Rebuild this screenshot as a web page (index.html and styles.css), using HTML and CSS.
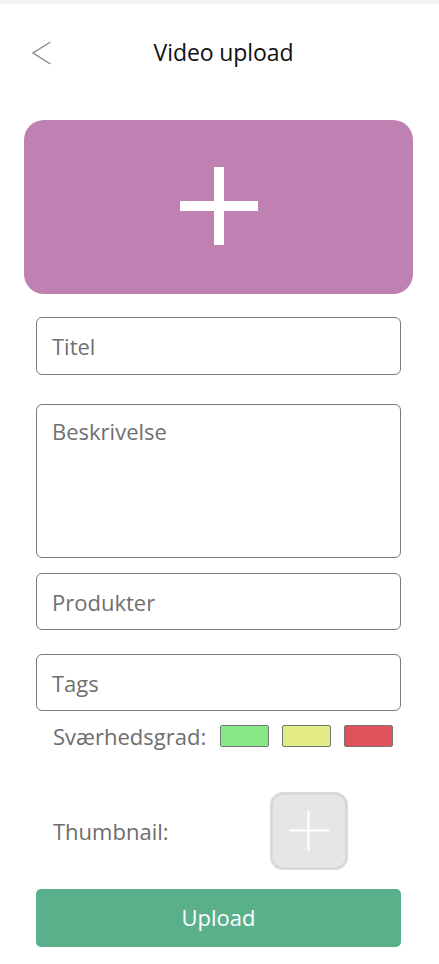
FILE: index.html
```html
<!DOCTYPE html>
<html lang="da">
<head>
<meta charset="utf-8">
<title>Video upload</title>
<link rel="stylesheet" href="styles.css">
</head>
<body>
<div class="app">
  <div class="statusbar"></div>
  <header class="header">
    <div class="back">
      <svg width="20" height="24" viewBox="0 0 20 24"><polyline points="18.5,1 1,12 18.5,23" fill="none" stroke="#8a8a8a" stroke-width="1.3"/></svg>
    </div>
    <h1 class="title">Video upload</h1>
    <div></div>
  </header>

  <div class="drop">
    <svg width="78" height="78" viewBox="0 0 78 78"><rect x="34" y="0" width="10" height="78" fill="#fff"/><rect x="0" y="34" width="78" height="10" fill="#fff"/></svg>
  </div>

  <div class="form">
    <div class="field f-title">Titel</div>
    <div class="field area">Beskrivelse</div>
    <div class="field f-prod">Produkter</div>
    <div class="field f-tags">Tags</div>

    <div class="difficulty">
      <span class="label">Sværhedsgrad:</span>
      <span class="swatch green"></span>
      <span class="swatch yellow"></span>
      <span class="swatch red"></span>
    </div>

    <div class="thumb-row">
      <span class="label">Thumbnail:</span>
      <div class="thumb">
        <svg width="40" height="40" viewBox="0 0 40 40"><rect x="18.5" y="0" width="2" height="40" fill="#fff"/><rect x="0" y="18.5" width="40" height="2" fill="#fff"/></svg>
      </div>
    </div>

    <button class="upload">Upload</button>
  </div>
</div>
</body>
</html>
```

FILE: styles.css
```css
* { box-sizing: border-box; }
html, body { margin: 0; padding: 0; background: #fff; }
body { font-family: "Open Sans", "Noto Sans", sans-serif; }
.app { width: 439px; }
.statusbar { height: 4px; background: #f3f3f3; }
.header {
  height: 96px;
  display: grid;
  grid-template-columns: 1fr auto 1fr;
  align-items: center;
}
.back { padding-left: 32px; display: flex; align-items: center; padding-top: 1px; }
.title {
  margin: 0;
  padding-left: 8px;
  font-size: 23px;
  font-weight: 400;
  color: #111;
  letter-spacing: -0.1px;
}
.drop {
  margin: 20px 26px 0 24px;
  height: 174px;
  background: #bf80b2;
  border-radius: 20px;
  display: flex;
  align-items: center;
  justify-content: center;
  padding-bottom: 2px;
}
.form { padding: 0 38px 0 36px; }
.field {
  height: 58px;
  border: 1px solid #7a7a7a;
  border-radius: 6px;
  padding: 0 15px;
  display: flex;
  align-items: center;
  font-size: 22px;
  color: #707070;
}
.f-title { margin-top: 23px; }
.area { margin-top: 29px; height: 154px; align-items: flex-start; padding-top: 11px; }
.f-prod { margin-top: 15px; height: 57px; }
.f-tags { margin-top: 24px; height: 57px; }
.label { font-size: 22px; color: #6e6e6e; }
.difficulty {
  margin-top: 14px;
  height: 22px;
  display: flex;
  align-items: center;
  padding-left: 17px;
}
.difficulty .label { margin-right: 14px; }
.swatch {
  width: 49px; height: 22px;
  border: 1px solid #767676;
  border-radius: 2px;
  margin-right: 13px;
  flex: none;
}
.green { background: #86e886; }
.yellow { background: #e2eb86; }
.red { background: #e0525a; }
.thumb-row {
  margin-top: 45px;
  display: flex;
  align-items: center;
  padding-left: 17px;
}
.thumb-row .label { width: 217px; }
.thumb {
  width: 78px; height: 78px;
  background: #e6e6e6;
  border: 3px solid #d9d9d9;
  border-radius: 13px;
  display: flex;
  align-items: center;
  justify-content: center;
}
.upload {
  display: block;
  width: 100%;
  margin-top: 19px;
  height: 58px;
  border: none;
  border-radius: 5px;
  background: #5ab08b;
  color: #fff;
  font-family: inherit;
  font-size: 22px;
  padding: 0 0 3px;
}
```
